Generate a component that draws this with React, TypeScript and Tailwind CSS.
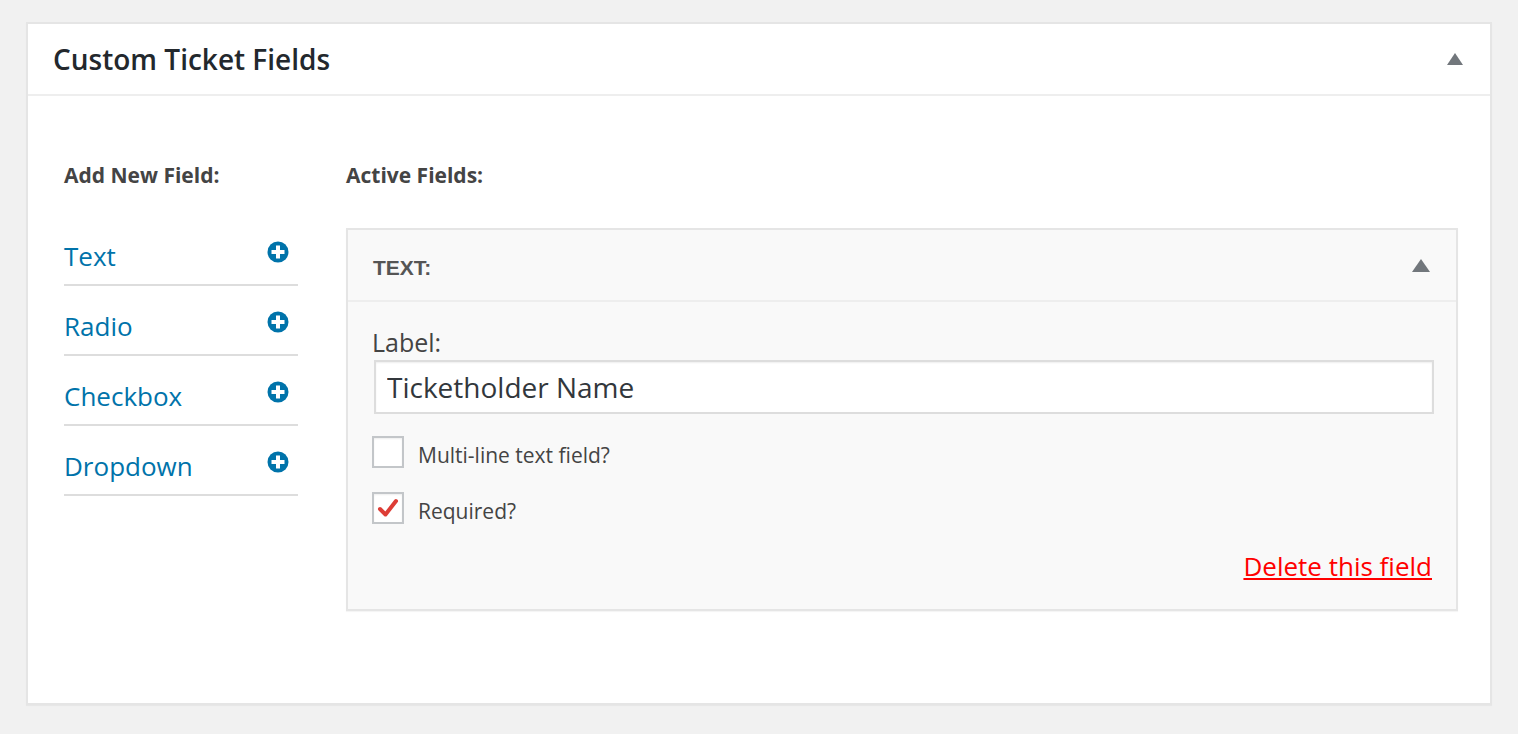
import React from 'react'

const FIELD_TYPES = ['Text', 'Radio', 'Checkbox', 'Dropdown']

function PlusCircle() {
  return (
    <svg width="22" height="22" viewBox="0 0 22 22" aria-hidden="true">
      <circle cx="11" cy="11" r="10.5" fill="#0073aa" />
      <rect x="9" y="4.5" width="4" height="13" fill="#fff" />
      <rect x="4.5" y="9" width="13" height="4" fill="#fff" />
    </svg>
  )
}

function Caret({ w, h }: { w: number; h: number }) {
  return (
    <svg width={w} height={h} viewBox={`0 0 ${w} ${h}`} aria-hidden="true">
      <polygon points={`${w / 2},0 ${w},${h} 0,${h}`} fill="#72777c" />
    </svg>
  )
}

function Checkbox({ checked, label }: { checked?: boolean; label: string }) {
  return (
    <label className="flex h-[32px] items-center gap-[14px]">
      <span className="flex h-[32px] w-[32px] items-center justify-center border-2 border-[#c3c6c9] bg-white shadow-[inset_0_1px_2px_rgba(0,0,0,0.07)]">
        {checked && (
          <svg width="24" height="22" viewBox="0 0 24 22" aria-hidden="true">
            <path d="M4 12 L9.5 17.5 L20 4" fill="none" stroke="#dd3d36" strokeWidth="4" strokeLinecap="round" strokeLinejoin="round" />
          </svg>
        )}
      </span>
      <span className="translate-y-[3px] text-[21px] leading-[32px] text-[#444]">{label}</span>
    </label>
  )
}

export default function App() {
  return (
    <div className="min-h-[734px] bg-[#f1f1f1] pl-[26px] pt-[22px] font-['Open_Sans',sans-serif]">
      <div className="w-[1466px] border-2 border-[#e5e5e5] bg-white shadow-[0_1px_1px_rgba(0,0,0,0.04)]">
        {/* box header */}
        <div className="flex h-[72px] items-center justify-between border-b-2 border-[#eee] pl-[25px] pr-[27px]">
          <h2 className="text-[28px] font-semibold text-[#23282d]">Custom Ticket Fields</h2>
          <Caret w={16} h={12} />
        </div>

        <div className="flex gap-[48px] pb-[92px] pl-[36px] pr-[32px] pt-[64px]">
          {/* available field types */}
          <div className="w-[234px] shrink-0">
            <h3 className="text-[21px] font-bold leading-[30px] text-[#444]">Add New Field:</h3>
            <ul className="mt-[26px]">
              {FIELD_TYPES.map((type) => (
                <li key={type} className="flex h-[70px] items-center justify-between border-b-2 border-[#ddd] pr-[9px] pt-[12px]">
                  <a className="text-[26px] text-[#0073aa]">{type}</a>
                  <span className="-mt-[8px]">
                    <PlusCircle />
                  </span>
                </li>
              ))}
            </ul>
          </div>

          {/* fields already added */}
          <div className="flex-1">
            <h3 className="text-[21px] font-bold leading-[30px] text-[#444]">Active Fields:</h3>
            <div className="mt-[38px] border-2 border-[#e5e5e5] bg-[#f9f9f9] shadow-[0_1px_1px_rgba(0,0,0,0.04)]">
              <div className="flex h-[72px] items-center justify-between border-b-2 border-[#eee] pl-[25px] pr-[26px]">
                <span className="mt-[6px] font-['Liberation_Sans',Arial,sans-serif] text-[21px] font-bold text-[#555]">TEXT:</span>
                <Caret w={18} h={13} />
              </div>
              <div className="pb-[25px] pl-[24px] pr-[22px] pt-[22px]">
                <div className="text-[25px] leading-[36px] text-[#444]">Label:</div>
                <div className="pl-[2px]">
                  <input
                    className="block h-[54px] w-full border-2 border-[#ddd] bg-white px-[11px] text-[28px] text-[#32373c] shadow-[inset_0_1px_2px_rgba(0,0,0,0.07)] outline-none"
                    defaultValue="Ticketholder Name"
                  />
                </div>
                <div className="mt-[22px] flex flex-col gap-[24px]">
                  <Checkbox label="Multi-line text field?" />
                  <Checkbox checked label="Required?" />
                </div>
                <div className="mt-[24px] pr-[2px] text-right">
                  <a className="text-[26px] leading-[36px] text-[#f00] underline">Delete this field</a>
                </div>
              </div>
            </div>
          </div>
        </div>
      </div>
    </div>
  )
}
